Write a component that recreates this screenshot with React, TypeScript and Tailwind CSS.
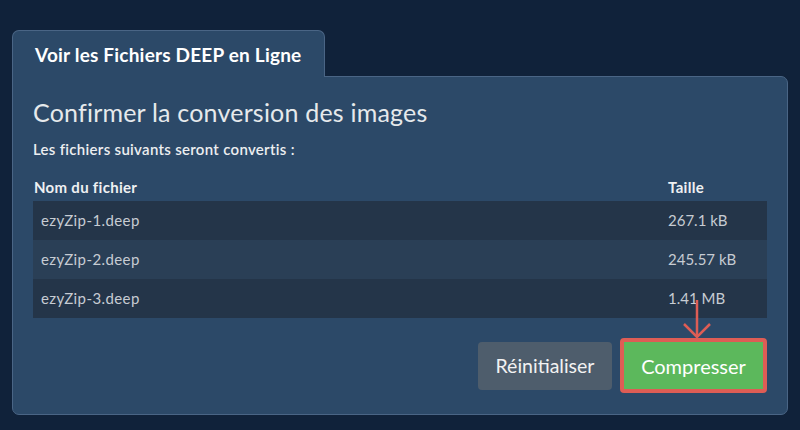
const files = [
  { name: 'ezyZip-1.deep', size: '267.1 kB' },
  { name: 'ezyZip-2.deep', size: '245.57 kB' },
  { name: 'ezyZip-3.deep', size: '1.41 MB' },
]

export default function App() {
  return (
    <div
      className="h-[430px] w-[800px] bg-[#10223a] pl-[12px] pt-[30px]"
      style={{ fontFamily: 'Lato, "Open Sans", sans-serif' }}
    >
      <div className="w-[776px]">
        <div className="relative z-10 -mb-px flex h-[47px] w-[313px] items-center rounded-t-[7px] border border-b-0 border-[#4a6585] bg-[#2c4968] pl-[22px] pt-[2px]">
          <span className="text-[19px] font-bold tracking-[0.2px] text-white">Voir les Fichiers DEEP en Ligne</span>
        </div>
        <div className="h-[339px] rounded-b-[7px] rounded-tr-[7px] border border-[#4a6585] bg-[#2c4968] px-[20px] pt-[20px]">
          <h1 className="text-[25px] leading-[30px] tracking-[0.2px] text-[#e6e9ec]">
            Confirmer la conversion des images
          </h1>
          <p className="mt-[13px] text-[15px] font-semibold leading-[18px] tracking-[0.3px] text-[#eceef0]">
            Les fichiers suivants seront convertis :
          </p>
          <div className="mt-[19px] w-[734px]">
            <div className="grid h-[24px] grid-cols-[635px_1fr] items-start text-[15px] font-bold leading-[20px] tracking-[0.3px] text-[#eef0f2]">
              <div className="pl-px">Nom du fichier</div>
              <div>Taille</div>
            </div>
            {files.map((f, i) => (
              <div
                key={f.name}
                className={
                  'grid h-[39px] grid-cols-[635px_1fr] items-center text-[#c7ccd3] ' +
                  (i % 2 === 0 ? 'bg-[#243549]' : 'bg-[#2a3f56]')
                }
              >
                <div className="pl-[8px] text-[15px] tracking-[0.4px]">{f.name}</div>
                <div className="text-[15px]">{f.size}</div>
              </div>
            ))}
          </div>
          <div className="mt-[20px] flex w-[734px] items-center justify-end gap-[8px]">
            <button className="h-[48px] w-[134px] rounded-[4px] bg-[#4e5d6c] text-[19.5px] text-[#f2f2f2]">
              Réinitialiser
            </button>
            <div className="relative h-[55px] w-[147px] rounded-[4px] border-[4px] border-[#de5d55] bg-[#5cb85c]">
              <button className="h-full w-full text-[20px] text-white">Compresser</button>
              <svg
                className="absolute left-[58px] top-[-42px]"
                width="30"
                height="40"
                viewBox="0 0 30 40"
                fill="none"
                stroke="#de5d55"
                strokeWidth="2.5"
              >
                <path d="M15 0 V37" />
                <path d="M2 24 L15 37 L28 24" />
              </svg>
            </div>
          </div>
        </div>
      </div>
    </div>
  )
}
